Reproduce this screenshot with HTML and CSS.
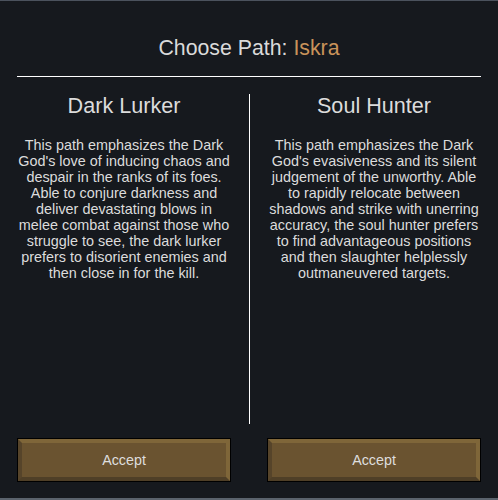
FILE: index.html
```html
<!DOCTYPE html>
<html lang="en">
<head>
    <meta charset="UTF-8">
    <meta name="viewport" content="width=device-width, initial-scale=1.0">
    <title>Choose Path</title>
    <link rel="stylesheet" href="styles.css">
</head>
<body>
    <div class="panel">
        <h1 class="title">Choose Path: <span class="hero-name">Iskra</span></h1>
        <div class="rule"></div>
        <div class="paths">
            <div class="path">
                <h2>Dark Lurker</h2>
                <p>This path emphasizes the Dark God's love of inducing chaos and despair in the ranks of its foes. Able to conjure darkness and deliver devastating blows in melee combat against those who struggle to see, the dark lurker prefers to disorient enemies and then close in for the kill.</p>
            </div>
            <div class="separator"></div>
            <div class="path">
                <h2>Soul Hunter</h2>
                <p>This path emphasizes the Dark God's evasiveness and its silent judgement of the unworthy. Able to rapidly relocate between shadows and strike with unerring accuracy, the soul hunter prefers to find advantageous positions and then slaughter helplessly outmaneuvered targets.</p>
            </div>
        </div>
        <div class="actions">
            <div class="accept"><button class="accept-btn">Accept</button></div>
            <div class="accept"><button class="accept-btn">Accept</button></div>
        </div>
    </div>
</body>
</html>
```

FILE: styles.css
```css
body {
    margin: 0;
    padding: 0;
    font-family: "Liberation Sans", Arial, sans-serif;
    background-color: #16191e;
}
.panel {
    width: 498px;
    height: 500px;
    box-sizing: border-box;
    border-top: 1px solid #4b525d;
    border-bottom: 2px solid #5b636d;
    background-color: #16191e;
    overflow: hidden;
}
.title {
    margin: 0;
    padding-top: 35px;
    text-align: center;
    font-size: 21.3px;
    line-height: 24px;
    font-weight: normal;
    color: #dadada;
}
.hero-name {
    color: #c9935a;
}
.rule {
    height: 1px;
    margin: 16px 17px 0;
    background-color: #fff;
}
.paths {
    display: grid;
    grid-template-columns: 214px 36px 214px;
    height: 330px;
    margin-top: 17px;
    padding: 0 17px;
}
.path {
    text-align: center;
}
.path h2 {
    margin: 0 0 19px;
    font-size: 21.6px;
    line-height: 24px;
    font-weight: normal;
    color: #dcdcdc;
}
.path p {
    margin: 0;
    font-size: 14.4px;
    line-height: 16px;
    color: #dcdcdc;
}
.separator {
    width: 1px;
    margin-left: 18px;
    background-color: #fff;
}
.actions {
    display: grid;
    grid-template-columns: 214px 214px;
    column-gap: 36px;
    margin-top: 14px;
    padding: 0 17px;
}
.accept {
    border: 1px solid #000;
}
.accept-btn {
    display: block;
    width: 100%;
    height: 42px;
    margin: 0;
    padding: 0;
    box-sizing: border-box;
    border: 4px solid;
    border-color: #7f6639 #7f6639 #4f3f27 #56442a;
    background-color: #6a5330;
    color: #dedede;
    font-family: "Liberation Sans", Arial, sans-serif;
    font-size: 14.3px;
}
```
